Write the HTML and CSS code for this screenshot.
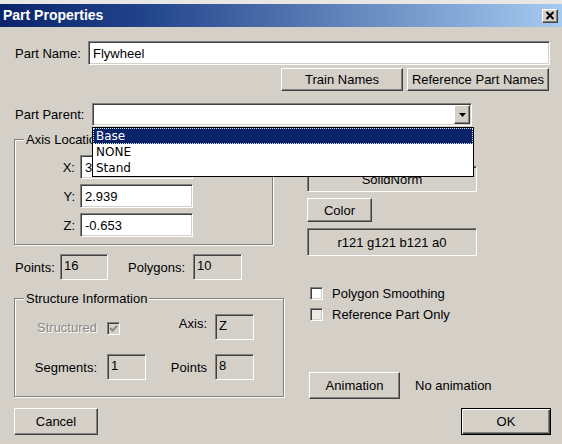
FILE: index.html
```html
<!DOCTYPE html>
<html>
<head>
<meta charset="utf-8">
<title>Part Properties</title>
<link rel="stylesheet" href="styles.css">
</head>
<body>
<div class="strip"></div>
<div class="titlebar">
  <span class="title">Part Properties</span>
  <span class="close-btn"><svg width="10" height="9" viewBox="0 0 10 9"><path d="M1.5 1 L8.5 8 M8.5 1 L1.5 8" stroke="#000" stroke-width="2" fill="none"/></svg></span>
</div>
<div class="content">
  <div class="row row-name">
    <span class="lbl lbl-name">Part Name:</span>
    <div class="field field-white name-input">Flywheel</div>
  </div>
  <div class="row row-btns">
    <div class="btn btn-train">Train Names</div>
    <div class="btn btn-ref">Reference Part Names</div>
  </div>
  <div class="row row-parent">
    <span class="lbl lbl-parent">Part Parent:</span>
    <div class="field field-white combo">
      <div class="btn combo-arrow"><svg width="7" height="4" viewBox="0 0 7 4"><path d="M0 0 H7 L3.5 4 Z" fill="#000"/></svg></div>
      <ul class="dropdown">
        <li class="opt opt-sel">Base</li>
        <li class="opt">NONE</li>
        <li class="opt">Stand</li>
      </ul>
    </div>
  </div>
  <div class="main">
    <div class="col-left">
      <div class="group group-axis">
        <span class="legend">Axis Location</span>
        <div class="axis-rows">
          <div class="axis-row"><span class="axis-lbl">X:</span><div class="field field-white axis-input">3.127</div></div>
          <div class="axis-row"><span class="axis-lbl">Y:</span><div class="field field-white axis-input">2.939</div></div>
          <div class="axis-row"><span class="axis-lbl">Z:</span><div class="field field-white axis-input">-0.653</div></div>
        </div>
      </div>
      <div class="row counts">
        <span class="lbl lbl-points">Points:</span>
        <div class="field static static-points">16</div>
        <span class="lbl lbl-polys">Polygons:</span>
        <div class="field static static-polys">10</div>
      </div>
      <div class="group group-struct">
        <span class="legend">Structure Information</span>
        <div class="struct-rows">
          <div class="struct-row">
            <span class="cell-a disabled">Structured</span>
            <div class="cell-b"><span class="check check-disabled"><svg width="9" height="9" viewBox="0 0 9 9"><path d="M1 4 L3.5 6.5 L8 2" stroke="#8a8884" stroke-width="2" fill="none"/></svg></span></div>
            <span class="cell-c cell-c-top">Axis:</span>
            <div class="field static static-small">Z</div>
          </div>
          <div class="struct-row">
            <span class="cell-a">Segments:</span>
            <div class="field static static-small">1</div>
            <span class="cell-c">Points</span>
            <div class="field static static-small">8</div>
          </div>
        </div>
      </div>
    </div>
    <div class="col-right">
      <div class="field static static-wide solidnorm">SolidNorm</div>
      <div class="btn btn-color">Color</div>
      <div class="field static static-wide readout">r121 g121 b121 a0</div>
      <div class="checks">
        <div class="check-row"><span class="check"></span><span class="check-lbl">Polygon Smoothing</span></div>
        <div class="check-row"><span class="check check-light"></span><span class="check-lbl">Reference Part Only</span></div>
      </div>
      <div class="anim-row">
        <div class="btn btn-anim">Animation</div>
        <span class="anim-text">No animation</span>
      </div>
    </div>
  </div>
  <div class="row bottom">
    <div class="btn btn-cancel">Cancel</div>
    <div class="btn btn-ok">OK</div>
  </div>
</div>
</body>
</html>
```
FILE: styles.css
```css
* { box-sizing: border-box; }
html, body {
  margin: 0;
  padding: 0;
}
body {
  width: 562px;
  height: 444px;
  overflow: hidden;
  background: #d4d0c8;
  font-family: "Liberation Sans", Arial, sans-serif;
  font-size: 13px;
  line-height: 15px;
  color: #000;
}
.strip {
  height: 4px;
  background: #e9e7e3;
}
.titlebar {
  height: 23px;
  display: flex;
  align-items: center;
  justify-content: space-between;
  padding: 0 4px 0 3px;
  background: linear-gradient(to right, #0a246a 0%, #21438a 25%, #a6caf0 100%);
}
.title {
  color: #fff;
  font-weight: bold;
  font-size: 14px;
}
.close-btn {
  width: 16px;
  height: 14px;
  display: flex;
  align-items: center;
  justify-content: center;
  background: #d4d0c8;
  border: 1px solid;
  border-color: #fff #404040 #404040 #fff;
  box-shadow: inset -1px -1px 0 #808080;
}
.content {
  padding: 0 11px 0 14px;
}
.row {
  display: flex;
  align-items: center;
}
.lbl {
  padding-left: 1px;
  flex: none;
}
.field {
  border: 1px solid;
  border-color: #808080 #fff #fff #808080;
  box-shadow: inset 1px 1px 0 #404040, inset -1px -1px 0 #d4d0c8;
  flex: none;
}
.field-white {
  background: #fff;
  padding: 0 4px;
  display: flex;
  align-items: center;
}
.btn {
  border: 1px solid;
  border-color: #fff #404040 #404040 #fff;
  box-shadow: inset -1px -1px 0 #808080;
  background: #d4d0c8;
  display: flex;
  align-items: center;
  justify-content: center;
  flex: none;
}
.row-name { margin-top: 14px; }
.lbl-name { width: 74px; }
.name-input { width: 462px; height: 24px; }

.row-btns {
  margin-top: 3px;
  justify-content: flex-end;
  padding-right: 2px;
  gap: 4px;
}
.btn-train { width: 122px; height: 23px; }
.btn-ref { width: 142px; height: 23px; }

.row-parent { margin-top: 12px; }
.lbl-parent { width: 78px; }
.combo {
  position: relative;
  width: 380px;
  height: 23px;
  padding: 0;
  justify-content: flex-end;
  z-index: 10;
}
.combo-arrow {
  width: 16px;
  height: 19px;
  margin: 1px;
}
.dropdown {
  position: absolute;
  top: 23px;
  left: -1px;
  width: 382px;
  margin: 0;
  padding: 0;
  list-style: none;
  border: 1px solid #000;
  background: #fff;
  font-family: "DejaVu Sans", sans-serif;
  font-size: 12px;
}
.opt {
  height: 16px;
  line-height: 16px;
  padding-left: 3px;
}
.opt-sel {
  background: #0a246a;
  color: #fff;
  outline: 1px dotted #e0e4f0;
  outline-offset: -1px;
}

.main {
  display: flex;
  margin-top: 13px;
}
.col-left { width: 270px; flex: none; }
.col-right { margin-left: 23px; flex: none; }

.group {
  border: 1px solid #808080;
  box-shadow: inset 1px 1px 0 #fff, 1px 1px 0 #fff;
}
.legend {
  display: block;
  width: fit-content;
  height: 15px;
  margin: -8px 0 0 9px;
  padding: 0 2px;
  background: #d4d0c8;
  position: relative;
}
.group-axis { width: 259px; }
.axis-rows {
  margin-top: 8px;
  padding-bottom: 7px;
  display: flex;
  flex-direction: column;
  gap: 5px;
}
.axis-row { display: flex; align-items: center; }
.axis-lbl { width: 60px; text-align: right; margin-right: 5px; }
.axis-input { width: 113px; height: 24px; }

.counts { margin-top: 9px; }
.lbl-points { width: 46px; }
.lbl-polys { width: 66px; margin-left: 19px; }
.static {
  background: #d4d0c8;
  padding: 3px 0 0 3px;
  height: 26px;
}
.static-points { width: 48px; }
.static-polys { width: 49px; }

.group-struct { width: 270px; margin-top: 18px; }
.struct-rows {
  margin-top: 8px;
  padding-bottom: 16px;
  display: flex;
  flex-direction: column;
  gap: 14px;
}
.struct-row { display: flex; align-items: center; height: 26px; }
.cell-a { width: 92px; text-align: right; padding-right: 10px; }
.cell-b { width: 39px; height: 26px; display: flex; align-items: center; padding-top: 2px; }
.cell-c { width: 69px; text-align: right; padding-right: 8px; }
.cell-c-top { align-self: flex-start; margin-top: 2px; }
.static-small { width: 39px; }
.disabled { color: #8a8884; text-shadow: 1px 1px 0 #fff; }

.check {
  width: 13px;
  height: 13px;
  flex: none;
  background: #fff;
  border: 1px solid;
  border-color: #808080 #fff #fff #808080;
  box-shadow: inset 1px 1px 0 #404040, inset -1px -1px 0 #d4d0c8;
  display: flex;
  align-items: center;
  justify-content: center;
}
.check-disabled { background: #d4d0c8; }
.check-light { background: #eceae6; }

.static-wide {
  width: 170px;
  display: flex;
  align-items: center;
  justify-content: center;
  padding: 0;
}
.solidnorm { margin-top: 27px; height: 26px; }
.btn-color { margin-top: 6px; width: 65px; height: 24px; }
.readout { margin-top: 6px; height: 28px; }

.checks {
  margin-top: 29px;
  padding-left: 3px;
  display: flex;
  flex-direction: column;
  gap: 5px;
}
.check-row { display: flex; align-items: center; height: 16px; }
.check-lbl { margin-left: 9px; }

.anim-row { display: flex; align-items: center; margin-top: 50px; padding-left: 2px; }
.btn-anim { width: 91px; height: 27px; }
.anim-text { margin-left: 15px; }

.bottom {
  margin-top: 9px;
  justify-content: space-between;
}
.btn-cancel { width: 84px; height: 27px; }
.btn-ok {
  width: 90px;
  height: 27px;
  border: 1px solid #000;
  box-shadow: inset 1px 1px 0 #fff, inset -1px -1px 0 #404040, inset -2px -2px 0 #808080;
}
```
